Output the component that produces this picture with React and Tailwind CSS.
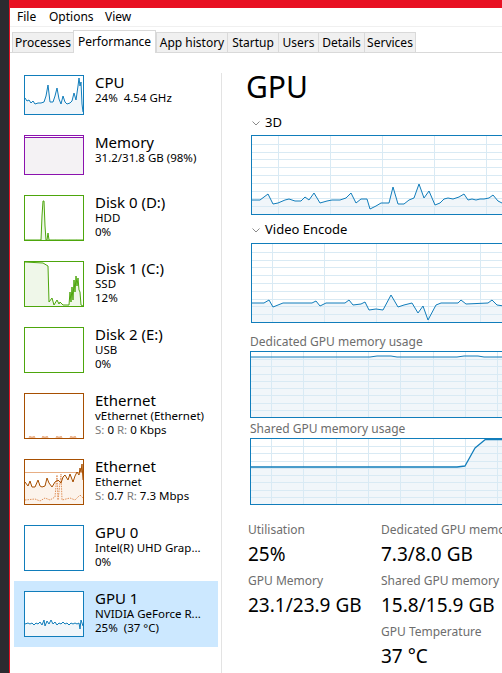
import React from 'react'

const blue = '#117dbb'

function pts(list) {
  return list.map((p) => p.join(',')).join(' ')
}

function area(list, bottom) {
  return `${list[0][0]},${bottom} ${pts(list)} ${list[list.length - 1][0]},${bottom}`
}

// big scrolling graph with a grid
function Graph({ className, iw, ih, vStart, vStep, hDiv, points, thick }) {
  const hs = Array.from({ length: hDiv - 1 }, (_, i) => Math.round(((i + 1) * ih) / hDiv) + 0.5)
  const vs = []
  for (let x = vStart; x < iw; x += vStep) vs.push(Math.round(x) + 0.5)
  return (
    <div className={'border border-[#117dbb] bg-white shrink-0 ' + className}>
      <svg width={iw} height={ih} className="block">
        <polygon points={area(points, ih)} fill="#f1f6fa" />
        {hs.map((y) => (
          <line key={'h' + y} x1="0" x2={iw} y1={y} y2={y} stroke="#d9eaf4" strokeWidth="1" shapeRendering="crispEdges" />
        ))}
        {vs.map((x) => (
          <line key={'v' + x} x1={x} x2={x} y1="0" y2={ih} stroke="#d9eaf4" strokeWidth="1" shapeRendering="crispEdges" />
        ))}
        <polyline points={pts(points)} fill="none" stroke={blue} strokeWidth={thick ? 1.3 : 1} strokeLinejoin="round" />
      </svg>
    </div>
  )
}

const cpuPts = [[0,22],[2,25],[4,24],[6,27],[8,25],[10,28],[13,27],[16,27],[19,26],[21,20],[23,9],[25,26],[28,26],[30,20],[32,12],[34,23],[36,28],[38,20],[40,26],[42,28],[45,27],[47,25],[49,17],[51,24],[53,10],[54,2],[55,10],[56,6],[57,28],[58,36]]
const disk0Pts = [[0,44],[16,44],[17,20],[18,5],[19,5],[20,30],[21,44],[22,44],[23,37],[24,44],[58,44]]
const disk1Pts = [[0,0],[18,1],[23,4],[24,40],[27,36],[29,43],[32,38],[34,42],[35,40],[38,43],[44,43],[45,30],[46,40],[47,25],[48,38],[49,18],[50,30],[51,14],[52,24],[53,16],[54,28],[55,30],[56,43],[58,44]]
const ethPts = [[0,22],[3,26],[5,21],[7,27],[10,27],[13,20],[15,26],[17,27],[20,26],[22,18],[24,23],[27,27],[30,22],[33,20],[36,23],[38,17],[40,15],[43,20],[45,14],[48,22],[50,16],[52,12],[54,15],[55,8],[56,12],[57,4],[58,20]]
const ethPts2 = [[0,40],[10,39],[15,41],[20,38],[25,40],[30,37],[32,15],[33,40],[36,14],[37,40],[45,38],[50,40],[55,35],[58,38]]
const gpu1Pts = [[0,32],[3,31],[5,32],[7,31],[9,33],[11,31],[13,32],[15,30],[17,33],[19,28],[20,34],[22,29],[24,32],[26,28],[28,32],[30,30],[32,33],[34,31],[36,32],[38,30],[40,32],[42,31],[44,33],[46,31],[48,32],[50,31],[52,32],[54,31],[55,37],[56,28],[58,34]]

const d3Pts = [[0,64],[8,64],[16,58],[21,68],[26,67],[33,64],[37,63],[43,65],[49,65],[53,61],[57,64],[62,57],[68,67],[75,65],[80,64],[88,64],[94,62],[99,57],[104,67],[109,63],[115,63],[118,73],[124,70],[129,67],[135,67],[137,67],[141,51],[146,68],[152,68],[157,64],[162,62],[167,48],[172,62],[177,55],[183,69],[188,67],[192,63],[196,62],[201,63],[207,61],[212,58],[216,64],[220,63],[224,64],[228,63],[232,63],[237,62],[241,59],[246,65],[250,67],[268,67]]
const encPts = [[0,59],[12,59],[17,56],[21,63],[31,59],[60,59],[64,57],[68,62],[74,59],[93,59],[97,56],[101,61],[109,60],[113,58],[117,66],[124,65],[131,66],[139,51],[146,63],[152,61],[160,59],[166,69],[171,62],[176,76],[184,61],[189,59],[206,59],[209,56],[214,60],[236,59],[240,56],[245,61],[252,62],[268,62]]
const dedPts = [[0,5],[119,5],[126,4],[140,4],[146,5],[206,5],[213,4],[227,4],[233,5],[268,5]]
const shrPts = [[0,28],[206,28],[214,27],[224,9],[234,0.7],[268,0.7]]

function Thumb({ className, ih, children }) {
  return (
    <div className={'w-[60px] border bg-white shrink-0 ' + className}>
      <svg width="58" height={ih} className="block">
        {children}
      </svg>
    </div>
  )
}

function Row({ title, thumb, tall, selected, children }) {
  return (
    <div className={(tall ? 'h-[66px] ' : 'h-[60px] ') + (selected ? 'bg-[#cce8ff] ' : '') + 'flex items-start pl-[10px] pt-[10px]'}>
      {thumb}
      <div className="ml-[11px] -mt-[2px] text-black whitespace-pre">
        <div className="text-[15px] leading-[18px]">{title}</div>
        <div className="text-[11.5px] leading-[14px]">{children}</div>
      </div>
    </div>
  )
}

function Stat({ label, value }) {
  return (
    <div className="h-[51px]">
      <div className="text-[12px] leading-[15px] text-[#6d6d6d] whitespace-nowrap">{label}</div>
      <div className="mt-[5px] text-[19px] leading-[24px] text-black whitespace-nowrap">{value}</div>
    </div>
  )
}

const tabs = [
  ['Processes', 'w-[61px]'],
  ['Performance', 'w-[83px]'],
  ['App history', 'w-[71px]'],
  ['Startup', 'w-[51px]'],
  ['Users', 'w-[40px]'],
  ['Details', 'w-[46px]'],
  ['Services', 'w-[52px]'],
]

export default function App() {
  return (
    <div className="w-[502px] h-[673px] overflow-hidden flex bg-white font-['Noto_Sans','Open_Sans',sans-serif] text-black">
      <div className="w-[9px] shrink-0 bg-[#2b2b30]" />
      <div className="flex-1 min-w-0 flex flex-col border-l border-[#e81123]">
        <div className="h-[8px] bg-[#e81123] shrink-0" />

        {/* menu */}
        <div className="h-[19px] shrink-0 flex items-center pl-[7px] text-[12px] border-b border-[#f0f0f0]">
          <span className="w-[32px]">File</span>
          <span className="w-[56px]">Options</span>
          <span>View</span>
        </div>

        {/* tabs */}
        <div className="h-[26px] shrink-0 flex items-end pl-[2px] border-b border-[#d9d9d9] text-[12px]">
          {tabs.map(([name, w]) =>
            name === 'Performance' ? (
              <div key={name} className={w + ' h-[23px] -mb-px bg-white border-t border-x border-[#d9d9d9] flex items-start justify-center pt-[2px] relative'}>
                {name}
              </div>
            ) : (
              <div key={name} className={w + ' h-[20px] bg-[#f0f0f0] border-t border-l border-[#d9d9d9] last:border-r flex items-center justify-center'}>
                {name}
              </div>
            )
          )}
        </div>

        <div className="flex-1 min-h-0 flex">
          {/* sidebar */}
          <div className="w-[211px] shrink-0 pl-[4px] pr-[3px] pt-[12px] flex flex-col">
            <Row title="CPU" thumb={
              <Thumb className="border-[#117dbb] h-[40px]" ih={38}>
                <polygon points={area(cpuPts, 38)} fill="#f1f6fa" />
                <polyline points={pts(cpuPts)} fill="none" stroke={blue} strokeWidth="1" />
              </Thumb>
            }>24%  4.54 GHz</Row>
            <Row title="Memory" thumb={
              <Thumb className="border-[#8b12ae] h-[40px]" ih={38}>
                <rect x="0" y="1.5" width="58" height="37" fill="#f4f2f4" />
                <line x1="0" x2="58" y1="1.5" y2="1.5" stroke="#8b12ae" strokeWidth="1" />
              </Thumb>
            }>31.2/31.8 GB (98%)</Row>
            <Row tall title="Disk 0 (D:)" thumb={
              <Thumb className="border-[#4da60c] h-[46px]" ih={44}>
                <polygon points={area(disk0Pts, 44)} fill="#eff7e9" />
                <polyline points={pts(disk0Pts)} fill="none" stroke="#4da60c" strokeWidth="1" />
                <line x1="30" x2="56" y1="43.5" y2="43.5" stroke="#9fd07c" strokeWidth="1" strokeDasharray="1 6" />
              </Thumb>
            }>{'HDD\n0%'}</Row>
            <Row tall title="Disk 1 (C:)" thumb={
              <Thumb className="border-[#4da60c] h-[46px]" ih={44}>
                <polygon points={area(disk1Pts, 44)} fill="#eff7e9" />
                <polyline points={pts(disk1Pts)} fill="none" stroke="#4da60c" strokeWidth="1" />
              </Thumb>
            }>{'SSD\n12%'}</Row>
            <Row tall title="Disk 2 (E:)" thumb={<Thumb className="border-[#4da60c] h-[46px]" ih={44} />}>{'USB\n0%'}</Row>
            <Row tall title="Ethernet" thumb={
              <Thumb className="border-[#a74f01] h-[46px]" ih={44}>
                {[4, 17, 31, 45].map((x) => (
                  <polyline key={x} points={`${x},44 ${x + 1},42 ${x + 2},44 ${x + 3},42.5 ${x + 4},44 ${x + 5},42 ${x + 6},44`} fill="none" stroke="#e9a77a" strokeWidth="1" />
                ))}
              </Thumb>
            }>
              {'vEthernet (Ethernet)\n'}
              <span className="text-[#7a7a7a]">S:</span> 0 <span className="text-[#7a7a7a]">R:</span> 0 Kbps
            </Row>
            <Row tall title="Ethernet" thumb={
              <Thumb className="border-[#a74f01] h-[46px]" ih={44}>
                <polygon points={area(ethPts, 44)} fill="#fcf3eb" />
                <line x1="0" x2="58" y1="12.5" y2="12.5" stroke="#e7ae84" strokeWidth="1" />
                <polyline points={pts(ethPts2)} fill="none" stroke="#e0915a" strokeWidth="1" strokeDasharray="1.5 1" />
                <polyline points={pts(ethPts)} fill="none" stroke="#a74f01" strokeWidth="1" />
              </Thumb>
            }>
              {'Ethernet\n'}
              <span className="text-[#7a7a7a]">S:</span> 0.7 <span className="text-[#7a7a7a]">R:</span> 7.3 Mbps
            </Row>
            <Row tall title="GPU 0" thumb={<Thumb className="border-[#117dbb] h-[46px]" ih={44} />}>{'Intel(R) UHD Grap...\n0%'}</Row>
            <Row tall selected title="GPU 1" thumb={
              <Thumb className="border-[#117dbb] h-[46px]" ih={44}>
                <polygon points={area(gpu1Pts, 44)} fill="#f1f6fa" />
                <polyline points={pts(gpu1Pts)} fill="none" stroke={blue} strokeWidth="1" />
              </Thumb>
            }>{'NVIDIA GeForce R...\n25%  (37 °C)'}</Row>
          </div>

          <div className="w-px shrink-0 mt-[20px] bg-[#e3e3e3]" />

          {/* detail panel */}
          <div className="flex-1 min-w-0 overflow-hidden pl-[29px]">
            <div className="-ml-[5px] mt-[16px] text-[30px] leading-[36px]">GPU</div>

            <div className="mt-[10px] flex items-center h-[16px] text-[13px]">
              <svg width="8" height="5" className="ml-[1px]"><polyline points="0.5,0.5 4,4 7.5,0.5" fill="none" stroke="#8a8a8a" strokeWidth="1" /></svg>
              <span className="ml-[5px]">3D</span>
            </div>
            <Graph className="mt-[4px] w-[270px] h-[80px]" iw={268} ih={78} vStart={26} vStep={52} hDiv={10} points={d3Pts} />

            <div className="mt-[7px] flex items-center h-[16px] text-[13px]">
              <svg width="8" height="5" className="ml-[1px]"><polyline points="0.5,0.5 4,4 7.5,0.5" fill="none" stroke="#8a8a8a" strokeWidth="1" /></svg>
              <span className="ml-[5px]">Video Encode</span>
            </div>
            <Graph className="mt-[5px] w-[270px] h-[80px]" iw={268} ih={78} vStart={20} vStep={52} hDiv={10} points={encPts} />

            <div className="mt-[11px] -ml-[1px] text-[12px] leading-[15px] text-[#6d6d6d]">Dedicated GPU memory usage</div>
            <Graph className="mt-[2px] -ml-[1px] w-[270px] h-[67px]" iw={268} ih={65} vStart={20} vStep={32.3} hDiv={9} points={dedPts} />

            <div className="mt-[3px] -ml-[1px] text-[12px] leading-[15px] text-[#6d6d6d]">Shared GPU memory usage</div>
            <Graph className="mt-[2px] -ml-[1px] w-[270px] h-[67px]" iw={268} ih={65} vStart={20} vStep={32.3} hDiv={9} points={shrPts} thick />

            <div className="mt-[17px] -ml-[3px] flex">
              <div className="w-[133px] shrink-0">
                <Stat label="Utilisation" value="25%" />
                <Stat label="GPU Memory" value="23.1/23.9 GB" />
              </div>
              <div>
                <Stat label="Dedicated GPU memory" value="7.3/8.0 GB" />
                <Stat label="Shared GPU memory" value="15.8/15.9 GB" />
                <Stat label="GPU Temperature" value="37 °C" />
              </div>
            </div>
          </div>
        </div>
      </div>
    </div>
  )
}
